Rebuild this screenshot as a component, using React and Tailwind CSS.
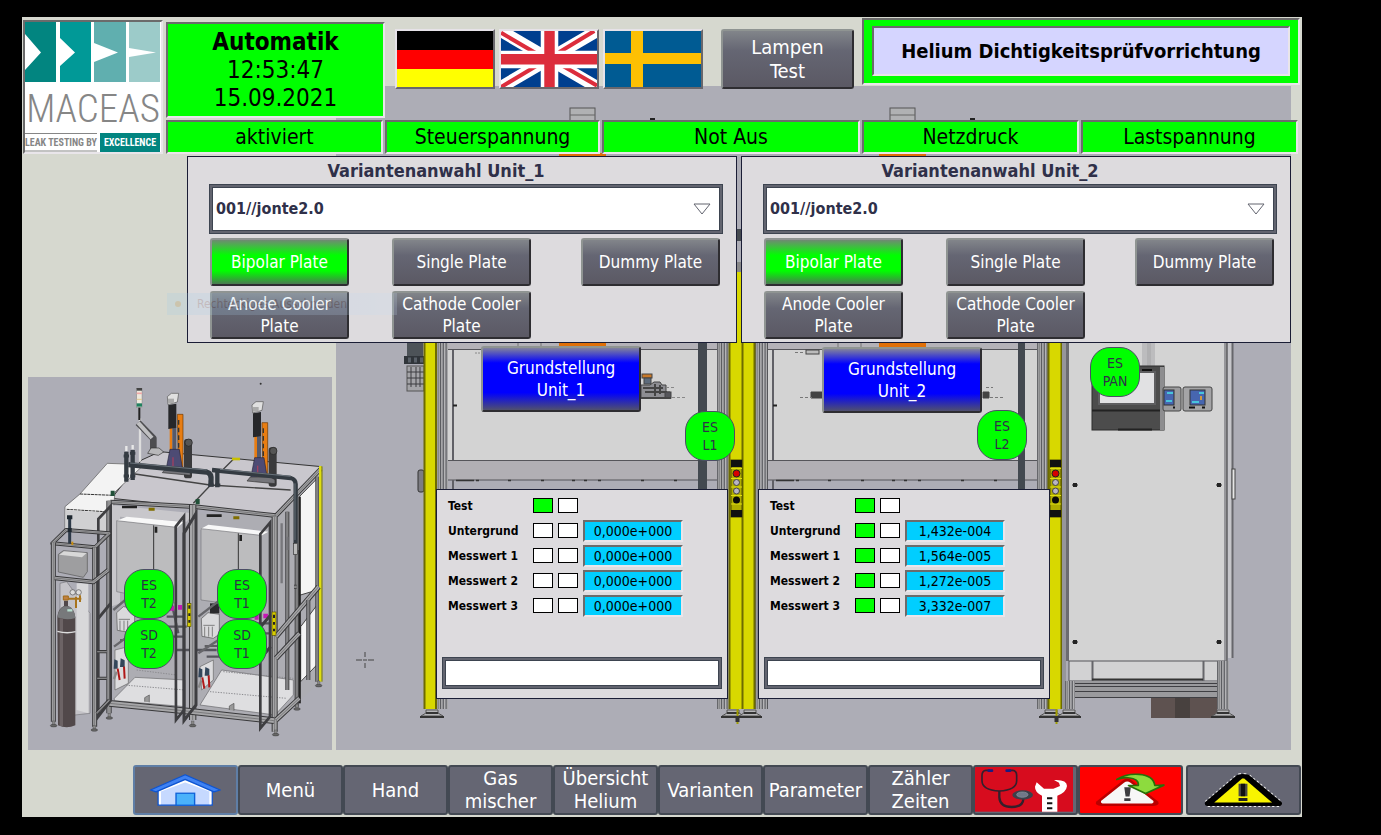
import React from "react";

const SUNKEN =
  "border-2 border-t-[#6b6b6b] border-l-[#6b6b6b] border-b-[#e9e5ea] border-r-[#e9e5ea]";
const RAISED =
  "rounded-[3px] border-2 border-t-[#8f9492] border-l-[#8f9492] border-b-[#2e2d31] border-r-[#2e2d31] text-white";
const GREY_FACE = "bg-linear-to-b from-[#82858a] via-[#656673] via-35% to-[#5b5964]";
const GREEN_FACE =
  "bg-[linear-gradient(to_bottom,#6f8a72_0%,#00ff00_35%,#00ff00_70%,#4a7a50_100%)]";
const BLUE_FACE =
  "bg-[linear-gradient(to_bottom,#82829c_0%,#0000ff_24%,#0000ff_72%,#50506e_100%)]";

const STAGE_W = 1280;
const STAGE_H = 800;

const BADGES = [
  { x: 685, y: 411, lines: ["ES", "L1"] },
  { x: 977, y: 410, lines: ["ES", "L2"] },
  { x: 1090, y: 347, lines: ["ES", "PAN"] },
  { x: 124, y: 569, lines: ["ES", "T2"] },
  { x: 217, y: 569, lines: ["ES", "T1"] },
  { x: 124, y: 619, lines: ["SD", "T2"] },
  { x: 217, y: 619, lines: ["SD", "T1"] },
];

const UNITS = [
  {
    id: 1,
    rows: [
      { label: "Test", ok: true },
      { label: "Untergrund", ok: false, value: "0,000e+000" },
      { label: "Messwert 1", ok: false, value: "0,000e+000" },
      { label: "Messwert 2", ok: false, value: "0,000e+000" },
      { label: "Messwert 3", ok: false, value: "0,000e+000" },
    ],
  },
  {
    id: 2,
    rows: [
      { label: "Test", ok: true },
      { label: "Untergrund", ok: true, value: "1,432e-004" },
      { label: "Messwert 1", ok: true, value: "1,564e-005" },
      { label: "Messwert 2", ok: true, value: "1,272e-005" },
      { label: "Messwert 3", ok: true, value: "3,332e-007" },
    ],
  },
];

function Logo() {
  return (
    <div className={`h-[134px] w-[140px] shrink-0 bg-white ${SUNKEN}`}>
      <svg viewBox="25 22 136 130" className="size-full" role="img" aria-label="MACEAS">
        <rect x="25" y="22" width="31" height="60" fill="#028580" />
        <rect x="60" y="22" width="31" height="60" fill="#019997" />
        <rect x="94" y="22" width="32" height="60" fill="#60afaf" />
        <rect x="129" y="22" width="31" height="60" fill="#9ccbc9" />
        <path d="M25 34L41 52.500L25 70Z M60 38L75 52.500L60 66Z M94 43L118 52.500L94 62Z M129 48L156 52.500L129 57Z" fill="#fff" />
        <text x="93" y="122" textAnchor="middle" className="font-['Roboto_Condensed','Liberation_Sans_Narrow',Roboto,sans-serif] text-[39px] font-light" fill="#868686">MACEAS</text>
        <path d="M25 133.500H97M25 151H97" stroke="#868686" strokeWidth="1" />
        <rect x="100" y="133" width="60" height="19" fill="#028580" />
        <text x="61" y="146" textAnchor="middle" className="font-['Roboto_Condensed','Liberation_Sans_Narrow',Roboto,sans-serif] text-[10px] font-bold" fill="#868686">LEAK TESTING BY</text>
        <text x="130" y="146" textAnchor="middle" className="font-['Roboto_Condensed','Liberation_Sans_Narrow',Roboto,sans-serif] text-[10px] font-bold" fill="#fff">EXCELLENCE</text>
      </svg>
    </div>
  );
}

function FlagButton({ label, children }) {
  return (
    <button
      type="button"
      aria-label={label}
      className="h-[60px] w-[100px] border-2 border-t-[#e6e2e8] border-l-[#e6e2e8] border-b-[#69676c] border-r-[#69676c]"
    >
      {children}
    </button>
  );
}

function Flags() {
  return (
    <div className="flex gap-1">
      <FlagButton label="Deutsch">
        <svg viewBox="0 0 96 56" preserveAspectRatio="none" className="size-full">
          <rect width="96" height="56" fill="#ff0" />
          <rect width="96" height="38" fill="#f00" />
          <rect width="96" height="19" fill="#000" />
        </svg>
      </FlagButton>
      <FlagButton label="English">
        <svg viewBox="363 93 285 165" preserveAspectRatio="none" className="size-full">
          <rect x="363" y="93" width="285" height="165" fill="#003f8f" />
          <path d="M363 93L648 258M648 93L363 258" stroke="#fff" strokeWidth="36" />
          <path d="M363 98L500 178M511 170L640 93M363 258L505 174M515 178L648 254" stroke="#dc2d3c" strokeWidth="12" />
          <path d="M507 93V258M363 177H648" stroke="#fff" strokeWidth="52" />
          <path d="M507 93V258M363 176H648" stroke="#dc2d3c" strokeWidth="31" />
        </svg>
      </FlagButton>
      <FlagButton label="Svenska">
        <svg viewBox="0 0 96 56" preserveAspectRatio="none" className="size-full">
          <rect width="96" height="56" fill="#005b93" />
          <path d="M32 0V56" stroke="#fdc003" strokeWidth="12" />
          <path d="M0 27.500H96" stroke="#fdc003" strokeWidth="11" />
        </svg>
      </FlagButton>
    </div>
  );
}

function Status({ children }) {
  return (
    <div className={`mr-0.5 flex h-[34px] items-center justify-center bg-[#00ff00] text-[21px] leading-6 ${SUNKEN}`}>
      {children}
    </div>
  );
}

function Header() {
  return (
    <header className="relative flex gap-[3px] pt-[3px] pr-0.5 pl-px">
      <Logo />
      <div className="grid min-w-0 flex-1 grid-cols-[219fr_217fr_260fr_219fr_219fr] grid-rows-[100px_34px]">
        <div className={`mt-0.5 flex h-24 flex-col items-center justify-center bg-[#00ff00] text-2xl leading-7 ${SUNKEN}`}>
          <strong>Automatik</strong>
          <time>12:53:47</time>
          <time>15.09.2021</time>
        </div>
        <div className="col-span-2 flex items-start justify-between pt-[9px] pr-2 pl-2.5">
          <Flags />
          <button type="button" className={`h-[60px] w-[133px] text-xl leading-6 ${RAISED} ${GREY_FACE}`}>
            Lampen
            <br />
            Test
          </button>
        </div>
        <div className={`col-span-2 -mt-0.5 h-[67px] bg-[#00ff00] px-2 py-1.5 ${SUNKEN}`}>
          <h1 className={`flex h-[50px] items-center justify-center bg-[#d5d5ff] text-xl leading-6 font-bold ${SUNKEN}`}>
            Helium Dichtigkeitsprüfvorrichtung
          </h1>
        </div>
        <Status>aktiviert</Status>
        <Status>Steuerspannung</Status>
        <Status>Not Aus</Status>
        <Status>Netzdruck</Status>
        <Status>Lastspannung</Status>
      </div>
    </header>
  );
}

function PlateButton({ active, className, children }) {
  return (
    <button
      type="button"
      aria-pressed={!!active}
      className={`h-12 text-[17px] leading-[22px] ${RAISED} ${active ? GREEN_FACE : GREY_FACE} ${className}`}
    >
      {children}
    </button>
  );
}

function VariantPanel({ unit }) {
  return (
    <section className="min-w-0 flex-1 border border-[#1a1d35] bg-[#dddbde] pb-[3px]">
      <h2 className="pt-px pr-[52px] text-center text-lg leading-[26px] font-bold text-[#2f3049]">
        <label htmlFor={`variant-${unit}`}>{`Variantenanwahl Unit_${unit}`}</label>
      </h2>
      <div className="relative mr-[13px] ml-[21px] border border-[#3d4450] bg-[#62646f] p-0.5">
        <select
          id={`variant-${unit}`}
          className="h-11 w-full appearance-none border border-[#3d4450] bg-white pl-[3px] text-base font-bold text-[#2f3049]"
        >
          <option>001//jonte2.0</option>
        </select>
        <svg viewBox="0 0 18 12" className="pointer-events-none absolute top-[18px] right-[11px] h-3 w-[18px]" fill="#fff" stroke="#62646f">
          <path d="M1 1H17L9 11Z" />
        </svg>
      </div>
      <div className="grid grid-cols-[139fr_43fr_139fr_50fr_139fr] gap-y-[5px] pt-1 pr-4 pl-[22px]">
        <PlateButton active className="col-start-1">Bipolar Plate</PlateButton>
        <PlateButton className="col-start-3">Single Plate</PlateButton>
        <PlateButton className="col-start-5">Dummy Plate</PlateButton>
        <PlateButton className="col-start-1">
          Anode Cooler
          <br />
          Plate
        </PlateButton>
        <PlateButton className="col-start-3">
          Cathode Cooler
          <br />
          Plate
        </PlateButton>
      </div>
    </section>
  );
}

function Led({ on }) {
  return <span className={`block h-[15px] w-5 border border-black ${on ? "bg-[#00ff00]" : "bg-white"}`} />;
}

function MeasurePanel({ unit }) {
  return (
    <section className="h-[210px] border border-[#1a1d35] bg-[#dddbde] px-[5px] pt-[3px]">
      <table className="ml-1.5 border-collapse text-black">
        <tbody>
          {unit.rows.map((row) => (
            <tr key={row.label} className="h-[25px]">
              <th scope="row" className="w-[85px] p-0 text-left text-xs leading-4 font-bold">{row.label}</th>
              <td className="w-[25px] p-0"><Led on={row.ok} /></td>
              <td className="w-[25px] p-0"><Led /></td>
              <td className="p-0">
                {row.value && (
                  <output className={`block h-[22px] w-[100px] bg-[#00ceff] text-center text-sm leading-[19px] ${SUNKEN}`}>
                    {row.value}
                  </output>
                )}
              </td>
            </tr>
          ))}
        </tbody>
      </table>
      <div className="mt-[39px] border border-[#3d4450] bg-[#62646f] p-0.5">
        <input
          type="text"
          aria-label={`Meldung Unit_${unit.id}`}
          className="block h-[26px] w-full border border-[#3d4450] bg-white px-1 text-sm"
        />
      </div>
    </section>
  );
}

function UnitColumn({ unit, className, buttonClass }) {
  return (
    <div className={`min-w-0 ${className}`}>
      <div className="h-[146px]">
        <button type="button" className={`h-[66px] w-40 text-[17px] leading-[22px] ${RAISED} ${BLUE_FACE} ${buttonClass}`}>
          Grundstellung
          <br />
          {`Unit_${unit.id}`}
        </button>
      </div>
      <MeasurePanel unit={unit} />
    </div>
  );
}

function Stripes({ x, y, h, colors }) {
  return colors.map((c, i) => <rect key={i} x={x + i} y={y} width="1" height={h} fill={c} />);
}

const PROFILE = ["#66676b", "#9a9a9c", "#88898b", "#a8a8aa", "#5c5d61", "#a6a6a8", "#949498", "#66676b", "#b4b4b6", "#88888c", "#77787c", "#a8a8aa"];

function ControlStrip({ x }) {
  return (
    <g>
      <rect x={x} y="460" width="11" height="57" fill="#b0ad00" stroke="#4e4c00" strokeWidth="1" />
      <rect x={x} y="460" width="11" height="7" fill="#111" />
      <rect x={x} y="510" width="11" height="7" fill="#111" />
      <path d={`M${x} 468.500h11M${x} 478.500h11M${x} 487h11M${x} 495.500h11M${x} 504h11`} stroke="#dede10" />
      <circle cx={x + 5.5} cy="473.500" r="3.500" fill="#d80000" stroke="#222" />
      <circle cx={x + 5.5} cy="482.500" r="3" fill="#b8b4c4" stroke="#444" />
      <circle cx={x + 5.5} cy="491" r="3" fill="#b8b4c4" stroke="#444" />
      <circle cx={x + 5.5} cy="500" r="3.500" fill="#090909" />
    </g>
  );
}

function Bay({ x }) {
  return (
    <g>
      <rect x={x} y="343" width="269" height="7" fill="#b4b2b8" />
      <rect x={x} y="350" width="269" height="110" fill="#d3d3d3" />
      <rect x={x} y="460" width="269" height="20" fill="#b1afb4" />
      <path d={`M${x} 349.500h269M${x} 460.500h269M${x} 480h269`} stroke="#55555a" />
      <path d={`M${x + 5} 350V460M${x + 5} 480V490`} stroke="#606066" strokeWidth="2" />
      <path d={`M${x + 8} 480.500h18M${x + 28} 480.500h3M${x + 60} 480.500h3M${x + 93} 480.500h3M${x + 124} 480.500h3M${x + 136} 480.500h3M${x + 150} 480.500h3M${x + 193} 480.500h3M${x + 226} 480.500h3`} stroke="#333" strokeWidth="1.500" />
      <path d={`M${x + 5} 405.500h4`} stroke="#222" strokeWidth="2" />
      <path d={`M${x + 70} 343v6M${x + 93} 343v6`} stroke="#777" />
      <rect x={x + 111} y="343" width="47" height="4" fill="#e07008" />
    </g>
  );
}

function Foot({ x }) {
  return (
    <g>
      <path d={`M${x - 6} 710h12v3l5 3h-22l5-3z`} fill="#b6b6b8" stroke="#555" />
      <rect x={x - 6} y="712" width="12" height="2" fill="#333" />
      <rect x={x - 12} y="716" width="24" height="2" fill="#333" />
    </g>
  );
}

function FrontView() {
  return (
    <g>
      <rect x="336" y="86" width="955" height="664" fill="#adadb6" />
      {[570, 890].map((x) => (
        <g key={x}>
          <rect x={x} y="108" width="25" height="14" fill="#b0b1b3" stroke="#555" />
          <path d={`M${x} 115h25`} stroke="#666" />
          <rect x={x + 80} y="118" width="5" height="3" fill="#222" />
          <rect x={x - 11} y="153" width="47" height="5" fill="#e07008" />
        </g>
      ))}
      <rect x="736" y="229" width="6" height="12" fill="#454a50" />
      <rect x="736" y="262" width="6" height="10" fill="#888" />

      <rect x="407" y="343" width="16" height="14" fill="#4d5358" />
      <rect x="404" y="356" width="20" height="8" fill="#30353a" />
      <path d="M408 360h15" stroke="#596068" strokeWidth="5" strokeDasharray="3 3" />
      <rect x="407" y="366" width="17" height="25" fill="#a4a4a8" stroke="#555" />
      <path d="M411 367v20M416 367v20M420 367v20M407 372h17M407 378h17M407 384h17" stroke="#3c3c40" />
      <rect x="418" y="470" width="6" height="22" rx="2" fill="#7c7c82" stroke="#333" />

      <Bay x={448} />
      <Bay x={768} />

      <Stripes x={436} y={343} h={366} colors={PROFILE} />
      <Stripes x={717} y={343} h={366} colors={PROFILE} />
      <Stripes x={755} y={343} h={366} colors={PROFILE.concat("#55565a")} />
      <Stripes x={1037} y={343} h={366} colors={PROFILE} />

      <rect x="698" y="343" width="9" height="147" fill="#434950" />
      <rect x="1018" y="343" width="7" height="147" fill="#434950" />

      <g fill="#d8d800">
        <rect x="424" y="343" width="12" height="366" />
        <rect x="729" y="272" width="26" height="437" />
        <rect x="1049" y="343" width="12" height="366" />
      </g>
      <path d="M424.500 343V709M436 343V709M729.500 343V709M742.500 272V709M754.500 343V709M1048.500 343V709M1061.500 343V709" stroke="#6d6b00" strokeWidth="2" />
      <ControlStrip x={731} />
      <ControlStrip x={1050} />

      <g stroke="#444" fill="#8d8d92">
        <rect x="642" y="374" width="10" height="4" fill="#c87828" />
        <rect x="644" y="378" width="7" height="6" fill="#5d6b7c" />
        <path d="M641 385h9l4-3h6l2 3h4v7h4v6h-29z" />
        <path d="M643 388h20M645 392h22M655 384v12M660 385v9" strokeWidth="2" />
        <rect x="665" y="392" width="6" height="6" fill="#55555a" />
        <path d="M641 398h30" fill="none" strokeWidth="2" />
        <path d="M672 397.500h14M666 387.500h8" strokeDasharray="3 2" stroke="#888" />
        <path d="M813 398h-2v-6h11v6z" fill="#444" />
        <path d="M983 398h6v-6h-6z" fill="#444" />
        <path d="M800 397.500h12M990 397.500h14M795 352.500h10M986 387.500h7" strokeDasharray="3 2" stroke="#777" />
        <rect x="806" y="350" width="13" height="4" fill="#bbb" />
        <path d="M475 353h6" strokeDasharray="2 1" stroke="#888" />
      </g>

      <rect x="1062" y="343" width="4" height="366" fill="#96969a" />
      <rect x="1066" y="343" width="160" height="318" fill="#d3d3d3" />
      <rect x="1066" y="343" width="3" height="318" fill="#6b6b70" />
      <rect x="1224" y="343" width="3" height="318" fill="#96969a" />
      <path d="M1227 343V661" stroke="#444" />
      <rect x="1228" y="343" width="4" height="315" fill="#c6c6ca" />
      <path d="M1232.500 343V658" stroke="#66666b" strokeWidth="2" />
      <rect x="1232" y="469" width="3" height="30" fill="#e6e6e6" stroke="#444" />
      {[[1075, 485], [1219, 485], [1075, 642], [1219, 642]].map(([x, y]) => (
        <g key={`${x}-${y}`}>
          <rect x={x - 2} y={y - 2} width="4" height="4" fill="#222" />
          <path d={`M${x - 3} ${y}h6`} stroke="#222" />
        </g>
      ))}
      <rect x="1142" y="343" width="13" height="23" fill="#bcbcbe" />
      <rect x="1147" y="343" width="4" height="23" fill="#b0b0b2" />
      <rect x="1092" y="366" width="72" height="64" fill="#4c4c4c" stroke="#2c2c2c" />
      <rect x="1160" y="367" width="4" height="63" fill="#8d8d8f" />
      <path d="M1092 410.500H1160M1118 429.500h34" stroke="#222" strokeWidth="2" />
      <rect x="1099" y="372" width="56" height="32" fill="#e1e1e3" stroke="#5e5e60" strokeWidth="2" />
      <path d="M1142 370h10" stroke="#111" strokeWidth="2" />
      <rect x="1163" y="387" width="18" height="24" rx="2" fill="#9c9c9e" stroke="#444" />
      <rect x="1164" y="390" width="10" height="15" fill="#4766b0" stroke="#333" />
      <path d="M1167 393h6M1166 401h6" stroke="#48c4dc" strokeWidth="2" />
      <rect x="1183" y="387" width="29" height="24" rx="2" fill="#a4a4a6" stroke="#444" />
      <rect x="1190" y="390" width="15" height="15" fill="#4766b0" stroke="#333" />
      <path d="M1199 393h5M1192 402h7" stroke="#48c4dc" strokeWidth="2" />
      <path d="M1201 396v4" stroke="#d09a40" strokeWidth="2" />
      <path d="M1189 407.500h6M1202 407.500h3M1173 407.500h2" stroke="#111" strokeWidth="2" />

      <rect x="1069" y="661" width="156" height="20" fill="#d2d2d3" stroke="#55555a" />
      <path d="M1092.500 661v20M1203.500 661v20" stroke="#66666b" strokeWidth="2" />
      <path d="M1092 679.500h111" stroke="#333" strokeWidth="2" />
      <rect x="1151" y="698" width="66" height="20" fill="#5e5250" />
      <rect x="1175" y="698" width="15" height="20" fill="#48413f" />
      <rect x="1075" y="681" width="142" height="17" fill="#9a9a9d" />
      <path d="M1075 683.500h142M1075 686.500h142M1075 691.500h142M1075 697.500h142" stroke="#3f3f43" />
      <Stripes x={1065} y={681} h={28} colors={PROFILE.slice(0, 10)} />
      <Stripes x={1217} y={661} h={48} colors={PROFILE} />
      <Foot x={432} />
      <Foot x={733} />
      <Foot x={750} />
      <Foot x={1051} />
      <Foot x={1069} />
      <Foot x={1223} />
      <path d="M737.500 709v15M1056.500 709v15" stroke="#a09c00" strokeWidth="2" />
      <path d="M737.500 716v6M1056.500 716v6" stroke="#333" strokeWidth="4" />
      <path d="M356 660h6M368 660h6M365 652v5M365 663v5M363 660h4" stroke="#444" fill="none" />
    </g>
  );
}

function Frame({ d, w = 12 }) {
  return (
    <g fill="none" strokeLinejoin="round">
      <path d={d} stroke="#38383a" strokeWidth={w} />
      <path d={d} stroke="#a6a6a8" strokeWidth={w - 6} />
      <path d={d} stroke="#4e4e50" strokeWidth="1.500" />
    </g>
  );
}

function LiftColumn() {
  return (
    <g>
      <rect x="492" y="207" width="24" height="118" rx="8" fill="#3a3a3c" />
      <circle cx="506" cy="218" r="11" fill="#555" stroke="#222" strokeWidth="2" />
      <path d="M472 133h17v158h-14z" fill="#e87d12" stroke="#6c3800" strokeWidth="2" />
      <path d="M476 150v130" stroke="#333" strokeWidth="4" strokeDasharray="14 9" />
      <rect x="449" y="170" width="8" height="72" fill="#e87d12" />
      <rect x="457" y="170" width="12" height="80" fill="#555a6b" />
      <path d="M445 105l24-4v72l-24 4z" fill="#26272a" />
      <path d="M442 80l12-10h22l-4 26-28 8z" fill="#e0e0e0" stroke="#555" strokeWidth="2" />
      <path d="M444 86h18v14h-18z" fill="#aaa" />
      <path d="M450 238h28l10 62h-50z" fill="#4d4b74" stroke="#26263c" strokeWidth="2" />
      <path d="M459 262v34" stroke="#a04060" strokeWidth="4" />
      <path d="M427 308l10-12h60l14 8v12z" fill="#75757a" stroke="#333" strokeWidth="2" />
    </g>
  );
}

function Valves() {
  return (
    <g>
      <path d="M283 868l10 4 0 24-12 0zM302 865l12 6 0 20-14 0z" fill="#33465a" />
      <path d="M293 896l6 34M312 890l2 36" stroke="#b01818" strokeWidth="6" />
      <path d="M290 905l-8 22" stroke="#888" strokeWidth="7" />
    </g>
  );
}

function Pump() {
  return (
    <g stroke="#555" strokeWidth="2">
      <path d="M290 728l20-18 34 5v60l-18 12-34-6z" fill="#dadadc" />
      <path d="M296 748h34M300 752v30M312 752v30M323 752v30" fill="none" />
      <path d="M344 770l40-20M344 790h60M360 800l40-30M300 810h80" stroke="#454548" strokeWidth="5" />
    </g>
  );
}

function IsoView() {
  return (
    <g>
      <rect x="28" y="377" width="304" height="373" fill="#adadb6" />
      <g transform="translate(20 370) scale(0.33333)">
        <circle cx="722" cy="41" r="3" fill="#333" />
        <path d="M365 270L420 245L905 290L770 437L275 385Z" fill="#c9c7cd" stroke="#333" strokeWidth="3" />
        <path d="M262 280L372 284L285 366L275 470L135 480V410L180 372Z" fill="#f3f3f3" stroke="#555" strokeWidth="2" />
        <path d="M180 372L280 376M140 418L272 426" stroke="#333" strokeWidth="3" strokeDasharray="9 2" />
        <path d="M137 420L270 428V487L137 478Z" fill="#d0d0d2" />
        <path d="M640 268L610 298M572 345L520 400M345 312L570 345L812 360" stroke="#444" strokeWidth="4" fill="none" />
        <path d="M282 425V1000L770 1060L905 930V300L770 437Z" fill="#adadb3" />
        <path d="M272 405L520 430L500 455L300 440V700L272 710Z" fill="#c8c7cb" />
        <path d="M290 452L320 440L492 456L470 474Z M540 478L565 464L745 485L722 498Z" fill="#f8f8f8" />
        <path d="M290 452L470 472V700L290 665Z M543 476L722 496V715L543 690Z" fill="#bcbcbe" stroke="#77777b" strokeWidth="2" />
        <path d="M401 466V640M655 490V640" stroke="#333" strokeWidth="3" />
        <path d="M408 470v18M662 495v18" stroke="#222" strokeWidth="8" />
        <path d="M306 411h45M560 437h45" stroke="#222" strokeWidth="8" />
        <path d="M386 418h18M640 443h18" stroke="#806e00" strokeWidth="9" />
        <path d="M838 380L892 325V660L838 676Z M842 770L895 700V880L842 935Z" fill="#f4f4f4" stroke="#444" strokeWidth="3" />
        <path d="M283 985L345 922L495 930V1010L283 992Z M540 1005L605 900L820 930V975L765 1035Z" fill="#dedee0" stroke="#66666a" strokeWidth="2" />
        <path d="M310 945L495 960M570 965L800 985M350 900L470 915M610 905L820 925" stroke="#8a8a8e" strokeWidth="3" strokeDasharray="4 4" />
        <path d="M374 995v-12l14-8v22M628 1020v-12l14-8v22" fill="#999" stroke="#555" strokeWidth="2" />
        <path d="M285 840l40-10v110l-40 20zM540 890l40-20v60l-35 30z" fill="#dcdcde" stroke="#666" strokeWidth="2" />
        <Pump />
        <g transform="translate(254 18)"><Pump /></g>
        <Valves />
        <g transform="translate(254 26)"><Valves /></g>
        <path d="M440 740h50M440 770h60M450 800h40M700 760h50M690 790h60M470 840h120M560 860h60M455 700l20 90" stroke="#55555c" strokeWidth="7" />
        <path d="M450 715h12M474 712h12M704 742h12M730 738h14" stroke="#c418b4" strokeWidth="14" />
        <rect x="570" y="700" width="28" height="30" fill="#2a2a2c" />
        <path d="M280 720L345 665M282 830L350 780M535 740L600 690M535 850L610 800" stroke="#66666a" strokeWidth="7" />

        <Frame d="M271 396L523 410L768 437" w={14} />
        <Frame d="M768 437L902 297" w={14} />
        <Frame d="M267 392V1030" w={16} />
        <Frame d="M518 405V1050" w={22} />
        <Frame d="M764 440V1085" w={18} />
        <Frame d="M802 425V960M830 540V1010M892 320V935" w={12} />
        <path d="M839 380V1000" stroke="#222" strokeWidth="7" />
        <path d="M901 288V935" stroke="#dede10" strokeWidth="8" />
        <path d="M906 290V935" stroke="#777700" strokeWidth="3" />
        <Frame d="M768 800L896 650M768 865L838 790M768 1050L838 985" w={16} />
        <Frame d="M268 1000L518 1025L762 1052" w={20} />
        <Frame d="M830 650h-8M865 690V930" w={12} />
        <path d="M785 460v180M802 500v40" stroke="#77777c" strokeWidth="7" />
        <path d="M235 447L272 408V992L235 1040Z" fill="none" stroke="#3e3e41" strokeWidth="8" />
        <path d="M467 470L492 438V1020L468 1050Z" fill="none" stroke="#3e3e41" strokeWidth="8" />
        <path d="M492 490L528 430V1005L492 1052Z" fill="none" stroke="#3e3e41" strokeWidth="9" />
        <path d="M721 492L750 458V1040L721 1075Z" fill="none" stroke="#3e3e41" strokeWidth="8" />
        <path d="M235 745L272 700M722 770L752 735M722 865L752 830" stroke="#3e3e41" strokeWidth="9" />
        <rect x="502" y="700" width="11" height="70" fill="#d8ce00" stroke="#554f00" strokeWidth="2" />
        <rect x="756" y="726" width="12" height="70" fill="#d8ce00" stroke="#554f00" strokeWidth="2" />
        <path d="M508 706v10M508 730v8M508 750v8M762 734v10M762 756v8M762 776v8" stroke="#222" strokeWidth="6" />

        <path d="M636 267h24" stroke="#c8c000" strokeWidth="8" />
        <path d="M360 145V275" stroke="#ddd" strokeWidth="7" />
        <path d="M358 112V150" stroke="#222" strokeWidth="6" />
        <path d="M354 158L400 205V240" fill="none" stroke="#4d4d50" strokeWidth="20" strokeLinejoin="round" />
        <path d="M354 158L396 204" fill="none" stroke="#c0c0c2" strokeWidth="12" />
        <path d="M383 250l10-16h24l14 12-16 10z" fill="#b8b8ba" stroke="#333" strokeWidth="2" />
        <rect x="350" y="55" width="16" height="57" fill="#eee9dd" stroke="#666" />
        <path d="M350 58h16" stroke="#444" strokeWidth="8" />
        <path d="M350 70h16" stroke="#f0a8a8" strokeWidth="5" />
        <path d="M350 105h16" stroke="#208060" strokeWidth="10" />
        <path d="M350 88h16" stroke="#e0c890" strokeWidth="3" />
        <LiftColumn />
        <g transform="translate(254 25)"><LiftColumn /></g>
        <g fill="none" stroke="#343b42" strokeLinejoin="round">
          <path d="M325 284L560 306Q576 310 573 335V350" strokeWidth="16" />
          <path d="M576 300L812 324Q828 328 827 345V520" strokeWidth="13" />
          <path d="M319 245V335M338 240V330M592 300V352" strokeWidth="13" />
          <path d="M311 258h16M330 250h16M311 318h16M331 318h15M565 345h16M585 345h16" strokeWidth="9" />
        </g>
        <path d="M330 279L560 300M600 298L812 319M825 340V510" fill="none" stroke="#6a737b" strokeWidth="3" />
        <path d="M319 228v15M338 225v13" stroke="#e8e8e8" strokeWidth="7" />
        <rect x="821" y="520" width="12" height="34" fill="#bbb" stroke="#333" strokeWidth="2" />
        <path d="M272 370h12M527 395h12" stroke="#205038" strokeWidth="16" />

        <path d="M120 640L140 635L210 730V1030L120 1040Z" fill="#c4c3c8" stroke="#77777b" strokeWidth="2" />
        <path d="M170 640H205V1030L170 1020Z" fill="#d8d8da" />
        <Frame d="M97 520L138 480L268 490L225 532Z" w={12} />
        <path d="M149 440V520" stroke="#2e3a48" strokeWidth="9" />
        <path d="M141 442h16M143 480h12" stroke="#1f2830" strokeWidth="12" />
        <path d="M157 515v10" stroke="#c88d10" strokeWidth="6" />
        <path d="M115 553L130 542L202 548V605L190 622L115 606Z" fill="#9e9ea0" stroke="#555" strokeWidth="2" />
        <path d="M118 554L132 544L200 549L186 562Z" fill="#d8d8d8" />
        <Frame d="M100 518V1055" w={15} />
        <Frame d="M224 532V1070" w={15} />
        <Frame d="M104 624L220 636L265 600" w={14} />
        <Frame d="M232 845h28M232 925h28M230 1030l38-40" w={10} />
        <path d="M112 740Q115 715 132 708V692h12V708Q163 715 166 742V1066Q140 1078 114 1066Z" fill="#51484a" />
        <path d="M112 742Q115 717 132 709H146Q163 716 166 744Q140 752 112 742Z" fill="#77797b" />
        <path d="M124 745V1068" stroke="#6c6365" strokeWidth="10" />
        <path d="M112 784Q140 792 167 785" fill="none" stroke="#ddd" strokeWidth="4" />
        <path d="M142 721h15" stroke="#b8e0d0" strokeWidth="7" />
        <path d="M130 678h15v12h-15z" fill="#c08040" stroke="#a06a18" strokeWidth="3" />
        <path d="M146 686h38M168 680v34M180 676v20" fill="none" stroke="#a8741c" strokeWidth="6" />
        <circle cx="158" cy="667" r="8" fill="#ddd" stroke="#555" strokeWidth="2" />
        <circle cx="176" cy="667" r="8" fill="#ddd" stroke="#555" strokeWidth="2" />
        {[[101, 1065], [223, 1078], [268, 1042], [518, 1065], [767, 1092], [831, 1015], [896, 945]].map(([x, y]) => (
          <g key={x}>
            <rect x={x - 4} y={y - 12} width="8" height="14" fill="#888" stroke="#444" />
            <ellipse cx={x} cy={y + 2} rx="10" ry="4" fill="#666" stroke="#222" />
          </g>
        ))}
      </g>
    </g>
  );
}

function Backdrop() {
  return (
    <svg
      viewBox={`22 17 ${STAGE_W} ${STAGE_H}`}
      preserveAspectRatio="none"
      className="absolute inset-0 size-full"
      aria-hidden="true"
    >
      <FrontView />
      <IsoView />
    </svg>
  );
}

function Badge({ x, y, lines }) {
  return (
    <div
      className="absolute flex size-[50px] flex-col items-center justify-center rounded-[20px] border border-[#4c4c66] bg-[#00ff00] text-sm leading-[18px] text-[#2f3049]"
      style={{ left: `${((x - 22) / STAGE_W) * 100}%`, top: `${((y - 17) / STAGE_H) * 100}%` }}
    >
      {lines.map((line) => (
        <span key={line}>{line}</span>
      ))}
    </div>
  );
}

const NAV_TEXT = [["Menü"], ["Hand"], ["Gas", "mischer"], ["Übersicht", "Helium"], ["Varianten"], ["Parameter"], ["Zähler", "Zeiten"]];

function NavButton({ label, className = "border-[#434953] bg-[#656673]", children }) {
  return (
    <button
      type="button"
      aria-label={label}
      className={`h-[50px] min-w-0 overflow-hidden rounded-[3px] border-2 text-xl leading-[23px] text-white ${className}`}
    >
      {children}
    </button>
  );
}

function Footer() {
  return (
    <nav className="relative grid grid-cols-[repeat(10,minmax(0,105fr))_minmax(0,118fr)] pr-px pb-0.5 pl-[111px]">
      <NavButton label="Startbild" className="border-[#5f7ea6] bg-[#656673]">
        <svg viewBox="40 34 288 142" preserveAspectRatio="none" className="size-full">
          <path d="M106 152V102L183 70L260 102V152Z" fill="#c6d9ff" stroke="#0f55d0" strokeWidth="4" />
          <path d="M111 149V108L183 78L255 108V149" fill="none" stroke="#fff" strokeWidth="6" />
          <path d="M84 105L183 58L283 105L265 111L183 72L100 111Z" fill="#3f82f2" stroke="#0f55d0" strokeWidth="4" strokeLinejoin="round" />
          <rect x="157" y="115" width="53" height="37" fill="#4bb2fa" stroke="#0f62d8" strokeWidth="4" />
        </svg>
      </NavButton>
      {NAV_TEXT.map((lines) => (
        <NavButton key={lines[0]}>
          {lines.map((line) => (
            <span key={line} className="block whitespace-nowrap">{line}</span>
          ))}
        </NavButton>
      ))}
      <NavButton label="Wartung">
        <svg viewBox="345 37 303 138" preserveAspectRatio="none" className="size-full">
          <rect x="345" y="37" width="294" height="134" fill="#d70c1e" />
          <path d="M390 47H378Q366 48 366 62V78Q366 106 418 109Q470 106 470 78V62Q470 48 458 47H446" fill="none" stroke="#33202c" strokeWidth="5" />
          <path d="M418 109V128Q420 157 455 157Q490 156 490 132" fill="none" stroke="#33202c" strokeWidth="7" />
          <path d="M386 48h10M440 48h10" stroke="#1b1b80" strokeWidth="8" strokeLinecap="round" />
          <ellipse cx="488" cy="121" rx="31" ry="14" fill="#3c404a" />
          <ellipse cx="487" cy="120" rx="17" ry="8" fill="#707888" stroke="#9098a4" strokeWidth="2" />
          <path d="M546 171V123Q524 112 525 96L530 83L552 102H580L600 94L597 84L582 76Q621 74 621 94Q619 113 592 123V171Z" fill="#fff" />
          <path d="M561 131h16M561 146h16M561 161h16" stroke="#111" strokeWidth="6" />
        </svg>
      </NavButton>
      <NavButton label="Störung quittieren" className="border-[#434953] bg-[#ff0000]">
        <svg viewBox="658 37 308 137" preserveAspectRatio="none" className="size-full">
          <path d="M708 140L790 76Q802 68 814 76L896 140Q904 152 880 153H724Q700 152 708 140Z" fill="#b90000" />
          <path d="M722 138L792 84Q802 76 812 84L882 138Q884 146 872 146H732Q720 146 722 138Z" fill="#f7f7f7" />
          <path d="M793 97h20l-4 28h-12zM793 130h19v8h-19z" fill="#3c3c40" />
          <path d="M770 74Q800 56 838 59Q882 62 886 92L914 91L858 116L806 92L836 92Q838 72 806 69Q790 67 770 74Z" fill="#8ddb3e" stroke="#267008" strokeWidth="5" strokeLinejoin="round" />
        </svg>
      </NavButton>
      <NavButton label="Meldungen" className="ml-[3px] border-[#434953] bg-[#656673]">
        <svg viewBox="982 37 338 137" preserveAspectRatio="none" className="size-full">
          <path d="M1040 146L1135 67Q1148 62 1164 67L1261 146Z" fill="none" stroke="#eee" strokeWidth="20" strokeLinejoin="round" strokeDasharray="7 7" />
          <path d="M1040 146L1135 67Q1148 62 1164 67L1261 146Z" fill="#000" stroke="#000" strokeWidth="14" strokeLinejoin="round" />
          <path d="M1062 143L1147 71H1153L1238 143Z" fill="#f8f400" />
          <path d="M1136 87h27v37h-27z" fill="#4c4c46" />
          <path d="M1143 87h13v37h-13z" fill="#111" />
          <path d="M1136 129h27v9h-27z" fill="#222" />
        </svg>
      </NavButton>
    </nav>
  );
}

export default function App() {
  return (
    <div className="min-h-screen bg-black pt-[17px] pr-[79px] pb-[18px] pl-[22px] font-['DejaVu_Sans_Condensed','DejaVu_Sans',sans-serif] text-black">
      <main className="relative flex flex-col bg-[#d6d8cf]">
        <Backdrop />
        <Header />
        <div className="relative flex gap-1 pt-0.5 pr-[11px] pl-[165px]">
          <VariantPanel unit={1} />
          <VariantPanel unit={2} />
          <div className="pointer-events-none absolute top-[139px] left-[145px] flex h-[22px] w-[230px] items-center gap-4 bg-linear-to-r from-[#9ccbe8] via-[#b4d7f0] to-[#c8dcf4] pl-2 text-xs opacity-20">
            <span className="size-1.5 rounded-full bg-[#a87828]" />
            <span className="whitespace-nowrap text-[#603c3c]">Rechteckiges Ausschneiden</span>
          </div>
        </div>
        <div className="relative grid grid-cols-[414fr_292fr_30fr_292fr_252fr] pb-[66px]">
          <UnitColumn unit={UNITS[0]} className="col-start-2" buttonClass="mt-[3px] ml-[45px]" />
          <UnitColumn unit={UNITS[1]} className="col-start-4" buttonClass="mt-1 ml-16" />
        </div>
        <Footer />
        {BADGES.map((b) => (
          <Badge key={b.lines.join(" ")} {...b} />
        ))}
      </main>
    </div>
  );
}
